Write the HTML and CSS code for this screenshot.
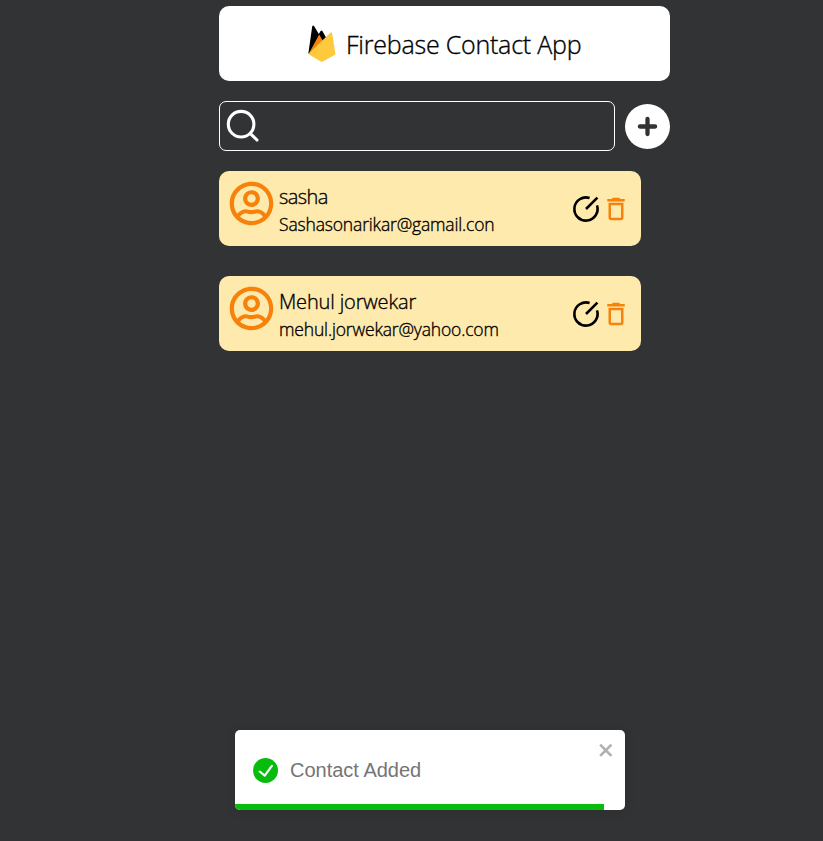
FILE: index.html
```
<!DOCTYPE html>
<html lang="en">
<head>
<meta charset="utf-8">
<title>Firebase Contact App</title>
<link rel="stylesheet" href="styles.css">
</head>
<body>
<svg class="defs" aria-hidden="true">
  <symbol id="user" viewBox="0 0 496 512"><path d="M248 104c-53 0-96 43-96 96s43 96 96 96 96-43 96-96-43-96-96-96zm0 144c-26.5 0-48-21.5-48-48s21.5-48 48-48 48 21.5 48 48-21.5 48-48 48zm0-240C111 8 0 119 0 256s111 248 248 248 248-111 248-248S385 8 248 8zm0 448c-49.7 0-95.1-18.3-130.1-48.4 14.9-23 40.4-38.6 69.6-39.5 20.8 6.4 40.6 9.6 60.5 9.6s39.7-3.1 60.5-9.6c29.2 1 54.7 16.6 69.6 39.5-35 30.1-80.4 48.4-130.1 48.4zm162.7-84.1c-24.4-31.4-62.1-51.9-105.1-51.9-10.2 0-26 9.6-57.6 9.6-31.5 0-47.4-9.6-57.6-9.6-42.9 0-80.6 20.5-105.1 51.9C61.9 339.2 48 299.2 48 256c0-110.3 89.7-200 200-200s200 89.7 200 200c0 43.2-13.9 83.2-37.3 115.9z"/></symbol>
  <symbol id="edit" viewBox="0 0 30 30"><path d="M18.6 4A11.6 11.6 0 1 0 26 11.4M15 15 26.4 3.6" fill="none" stroke="currentColor" stroke-width="2.6"/></symbol>
  <symbol id="trash" viewBox="0 0 24 24"><path fill-rule="evenodd" d="M6 19c0 1.1.9 2 2 2h8c1.1 0 2-.9 2-2V7H6v12zM8 9h8v10H8V9zm7.5-5-1-1h-5l-1 1H5v2h14V4h-3.5z"/></symbol>
</svg>
<main class="app">
  <header class="navbar">
    <svg class="logo" viewBox="0 0 28 38">
      <path d="M.3 28.8 4.2 1.6Q4.8-.2 6.2 1.2L10.8 9 12.6 6Q13.5 4.9 14.4 6L18.6 13.5 8 26z"/>
      <path fill="#f5820d" d="M.5 29.3 11.2 9.6 15.5 17 6 27z"/>
      <path fill="#fdca3e" d="M.3 29 22.4 7.7Q23.7 6.7 24.1 8.2L27.4 28.7Q27.5 29.4 27 29.8L14.9 36.5Q13.8 37.1 12.7 36.5z"/>
    </svg>
    <h1>Firebase Contact App</h1>
  </header>
  <div class="toolbar">
    <label class="search">
      <svg viewBox="0 0 38 38" fill="none" stroke="#fff" stroke-width="3.1" stroke-linecap="round"><circle cx="18.1" cy="17.2" r="12.8"/><path d="m27.6 26.8 6.4 6.2"/></svg>
      <input type="text" aria-label="Search contact">
    </label>
    <button class="add" aria-label="Add contact"><svg viewBox="0 0 45 45"><path d="M22.5 14.9v15.2M14.9 22.5h15.2" stroke="#323334" stroke-width="4.3" stroke-linecap="round"/></svg></button>
  </div>
  <section class="contacts">
    <article class="card">
      <svg class="avatar"><use href="#user"/></svg>
      <div class="info"><h2 class="name name-short">sasha</h2><p class="mail">Sashasonarikar@gamail.con</p></div>
      <div class="actions"><svg class="edit"><use href="#edit"/></svg><svg class="trash"><use href="#trash"/></svg></div>
    </article>
    <article class="card">
      <svg class="avatar"><use href="#user"/></svg>
      <div class="info"><h2 class="name">Mehul jorwekar</h2><p class="mail">mehul.jorwekar@yahoo.com</p></div>
      <div class="actions"><svg class="edit"><use href="#edit"/></svg><svg class="trash"><use href="#trash"/></svg></div>
    </article>
  </section>
</main>
<div class="toast" role="alert">
  <svg class="check" viewBox="0 0 24 24"><path d="M12 0a12 12 0 1012 12A12.014 12.014 0 0012 0zm6.927 8.2l-6.845 9.289a1.011 1.011 0 01-1.43.188l-4.888-3.908a1 1 0 111.25-1.562l4.076 3.261 6.227-8.451a1 1 0 111.61 1.183z"/></svg>
  <span class="message">Contact Added</span>
  <svg class="close" viewBox="0 0 14 16"><path d="M7.71 8.23l3.75 3.75-1.48 1.48-3.75-3.75-3.75 3.75L1 11.98l3.75-3.75L1 4.48 2.48 3l3.75 3.75L9.98 3l1.48 1.48-3.75 3.75z"/></svg>
  <div class="progress"></div>
</div>
</body>
</html>
```
FILE: styles.css
```
* { box-sizing: border-box; margin: 0; padding: 0; }
body {
  min-height: 841px;
  background: #323334;
  font-family: "Open Sans", "Noto Sans", sans-serif;
  color: #000;
}
svg { display: block; flex: none; }
.defs { position: absolute; width: 0; height: 0; }
.app { width: 451px; margin-left: 219px; padding-top: 6px; }
.navbar {
  height: 75px;
  display: flex;
  align-items: center;
  padding-left: 88.5px;
  gap: 10.5px;
  background: #fff;
  border-radius: 10px;
}
.logo { width: 28px; height: 38px; }
h1 { font-size: 25px; font-weight: 300; line-height: 34px; letter-spacing: -0.22px; white-space: nowrap; padding-top: 1px; }
h1, .name, .mail { -webkit-text-stroke: 0.35px #000; }
.toolbar { display: flex; align-items: center; gap: 10px; margin-top: 20px; }
.search {
  width: 396px;
  height: 50px;
  display: flex;
  align-items: center;
  padding-left: 3px;
  border: 1px solid #fff;
  border-radius: 7px;
}
.search svg { width: 38px; height: 38px; }
.search input { flex: 1; min-width: 0; height: 46px; border: 0; outline: 0; background: transparent; color: #fff; font: inherit; }
.add { width: 45px; height: 45px; border: 0; border-radius: 50%; background: #fff; }
.add svg { width: 45px; height: 45px; }
.contacts { display: flex; flex-direction: column; gap: 30px; margin-top: 20px; }
.card {
  width: 422px;
  height: 75px;
  display: flex;
  align-items: center;
  padding: 0 10px;
  background: #ffeaae;
  border-radius: 10px;
}
.avatar { width: 45px; height: 45px; align-self: flex-start; margin-top: 10px; fill: #f6820c; }
.info { flex: 1; margin-left: 5px; padding-top: 3px; }
.name { font-size: 20px; font-weight: 300; line-height: 28px; letter-spacing: -0.15px; }
.name-short { letter-spacing: -0.6px; }
.mail { font-size: 17.5px; font-weight: 300; line-height: 27px; letter-spacing: -0.16px; }
.actions { display: flex; }
.actions svg { width: 30px; height: 30px; }
.trash { fill: #f6820c; }
.toast {
  position: absolute;
  left: 235px;
  top: 730px;
  width: 390px;
  height: 80px;
  display: flex;
  align-items: center;
  padding-left: 18px;
  background: #fff;
  border-radius: 5px;
  overflow: hidden;
  box-shadow: 0 1px 12px rgba(0, 0, 0, 0.12);
}
.check { width: 25px; height: 25px; fill: #07bc0c; }
.message { margin-left: 12px; font: 20px/25px "Liberation Sans", Arial, sans-serif; color: #757575; }
.close { width: 17.5px; height: 20px; align-self: flex-start; margin: 10px 9.5px 0 auto; fill: #000; opacity: 0.3; }
.progress { position: absolute; left: 0; bottom: 0; width: 369px; height: 6px; background: #07bc0c; }
```
